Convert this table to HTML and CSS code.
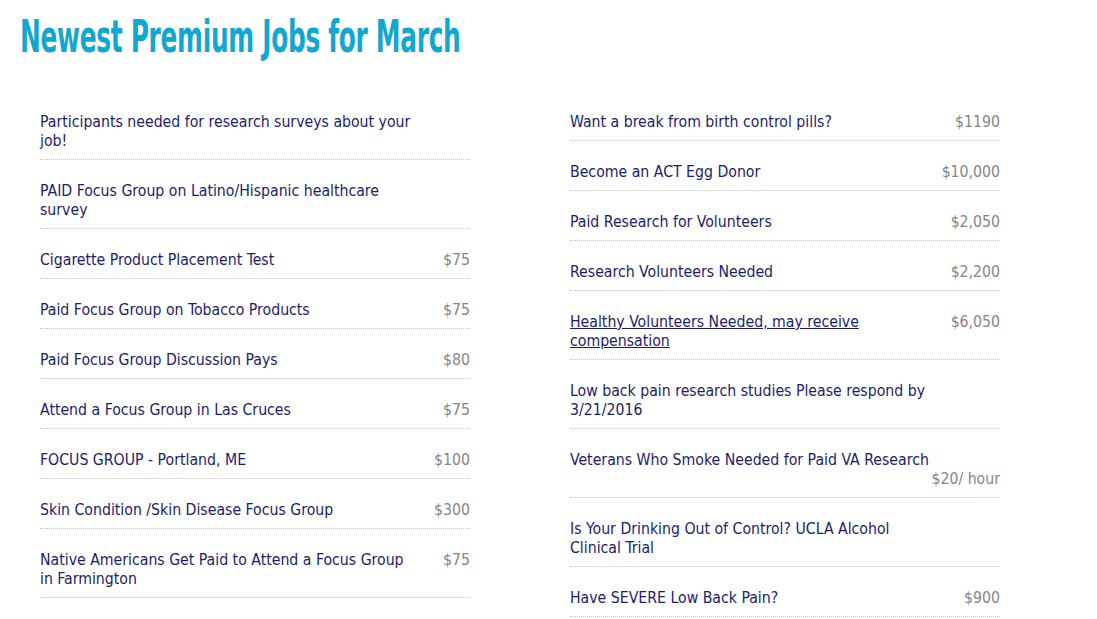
FILE: index.html
```html
<!DOCTYPE html>
<html lang="en">
<head>
<meta charset="utf-8">
<title>Newest Premium Jobs for March</title>
<link rel="stylesheet" href="styles.css">
</head>
<body>
<div class="page">
  <h1 class="title"><span class="title-text">Newest Premium Jobs for March</span></h1>
  <div class="columns">
    <ul class="jobs">
      <li class="job"><a class="job-title" href="#">Participants needed for research surveys about your job!</a></li>
      <li class="job"><a class="job-title" href="#">PAID Focus Group on Latino/Hispanic healthcare survey</a></li>
      <li class="job"><a class="job-title" href="#">Cigarette Product Placement Test</a><span class="pay">$75</span></li>
      <li class="job"><a class="job-title" href="#">Paid Focus Group on Tobacco Products</a><span class="pay">$75</span></li>
      <li class="job"><a class="job-title" href="#">Paid Focus Group Discussion Pays</a><span class="pay">$80</span></li>
      <li class="job"><a class="job-title" href="#">Attend a Focus Group in Las Cruces</a><span class="pay">$75</span></li>
      <li class="job"><a class="job-title" href="#">FOCUS GROUP - Portland, ME</a><span class="pay">$100</span></li>
      <li class="job"><a class="job-title" href="#">Skin Condition /Skin Disease Focus Group</a><span class="pay">$300</span></li>
      <li class="job"><a class="job-title" href="#">Native Americans Get Paid to Attend a Focus Group in Farmington</a><span class="pay">$75</span></li>
    </ul>
    <ul class="jobs">
      <li class="job"><a class="job-title" href="#">Want a break from birth control pills?</a><span class="pay">$1190</span></li>
      <li class="job"><a class="job-title" href="#">Become an ACT Egg Donor</a><span class="pay">$10,000</span></li>
      <li class="job"><a class="job-title" href="#">Paid Research for Volunteers</a><span class="pay">$2,050</span></li>
      <li class="job"><a class="job-title" href="#">Research Volunteers Needed</a><span class="pay">$2,200</span></li>
      <li class="job"><a class="job-title is-hover" href="#">Healthy Volunteers Needed, may receive compensation</a><span class="pay">$6,050</span></li>
      <li class="job"><a class="job-title" href="#">Low back pain research studies Please respond by 3/21/2016</a></li>
      <li class="job"><a class="job-title" href="#">Veterans Who Smoke Needed for Paid VA Research</a><span class="pay">$20/ hour</span></li>
      <li class="job"><a class="job-title" href="#">Is Your Drinking Out of Control? UCLA Alcohol Clinical Trial</a></li>
      <li class="job"><a class="job-title" href="#">Have SEVERE Low Back Pain?</a><span class="pay">$900</span></li>
    </ul>
  </div>
</div>
</body>
</html>
```
FILE: styles.css
```css
html, body {
  margin: 0;
  padding: 0;
  background: #ffffff;
}

.page {
  padding: 10px 0 0 20px;
  font-family: "DejaVu Sans Condensed", "DejaVu Sans", sans-serif;
}

.title {
  margin: 0;
  font-family: "DejaVu Sans Condensed", "DejaVu Sans", sans-serif;
  font-weight: bold;
  font-size: 45px;
  line-height: 54px;
  letter-spacing: -0.5px;
  color: #12a7d0;
  white-space: nowrap;
}

.title-text {
  display: inline-block;
  transform: scaleX(0.614);
  transform-origin: left center;
}

.columns {
  display: grid;
  grid-template-columns: 430px 430px;
  column-gap: 100px;
  margin: 27px 0 0 20px;
  align-items: start;
}

.jobs {
  list-style: none;
  margin: 0;
  padding: 0;
}

.job {
  display: flex;
  flex-wrap: wrap;
  align-items: flex-start;
  padding: 21px 0 9px;
  border-bottom: 1px dotted #c4c4c4;
  font-size: 15.7px;
  line-height: 19px;
}

.job-title {
  max-width: 372px;
  color: #1c1c6c;
  text-decoration: none;
}

.job-title.is-hover {
  text-decoration: underline;
}

.pay {
  margin-left: auto;
  padding-left: 8px;
  color: #858585;
  white-space: nowrap;
}
```
